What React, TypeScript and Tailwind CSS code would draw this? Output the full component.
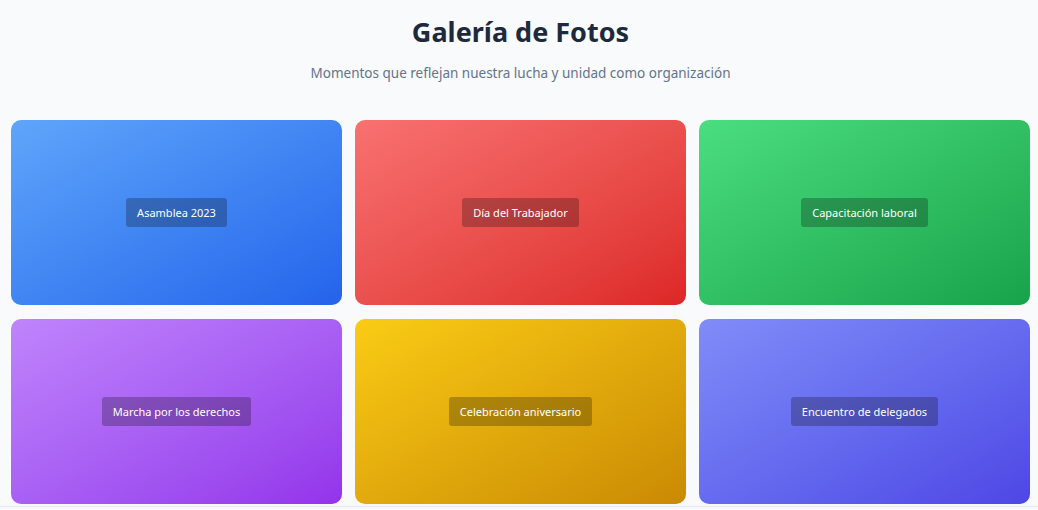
import React from 'react';

type Photo = {
    label: string;
    gradient: string;
};

const photos: Photo[] = [
    { label: 'Asamblea 2023', gradient: 'from-[#60a5fa] to-[#2563eb]' },
    { label: 'Día del Trabajador', gradient: 'from-[#f87171] to-[#dc2626]' },
    { label: 'Capacitación laboral', gradient: 'from-[#4ade80] to-[#16a34a]' },
    { label: 'Marcha por los derechos', gradient: 'from-[#c084fc] to-[#9333ea]' },
    { label: 'Celebración aniversario', gradient: 'from-[#facc15] to-[#ca8a04]' },
    { label: 'Encuentro de delegados', gradient: 'from-[#818cf8] to-[#4f46e5]' },
];

const PhotoCard: React.FC<{ photo: Photo }> = ({ photo }) => {
    return (
        <div className={`h-[185px] rounded-[10px] bg-linear-to-br ${photo.gradient} flex items-center justify-center`}>
            <span className="bg-black/25 text-white text-[11px] leading-[17px] px-[11px] py-[6px] rounded-[3px]">
                {photo.label}
            </span>
        </div>
    );
};

const App: React.FC = () => {
    return (
        <div className="min-h-screen bg-[#f8fafc] font-['Noto_Sans',sans-serif]">
            <section className="pt-[14px] pl-[11px] pr-[8px] pb-[2px] border-b border-[#e5e7eb]">
                <div className="text-center">
                    <h2 className="text-[27px] leading-[36px] font-bold text-[#1e293b]">Galería de Fotos</h2>
                    <p className="mt-[13px] text-[13.5px] leading-[20px] text-[#64748b]">
                        Momentos que reflejan nuestra lucha y unidad como organización
                    </p>
                </div>
                <div className="mt-[37px] grid grid-cols-3 gap-x-[13px] gap-y-[14px]">
                    {photos.map((p) => (
                        <PhotoCard key={p.label} photo={p} />
                    ))}
                </div>
            </section>
        </div>
    );
};

export default App;
